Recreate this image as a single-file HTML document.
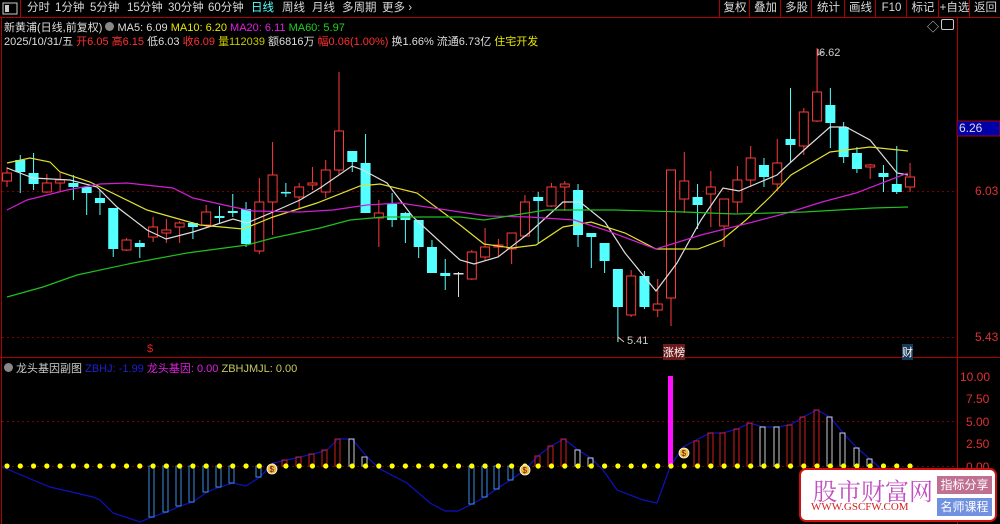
<!DOCTYPE html>
<html><head><meta charset="utf-8"><style>
*{margin:0;padding:0}
body{width:1000px;height:524px;background:#000;overflow:hidden;font-family:"Liberation Sans","Noto Sans CJK SC",sans-serif;position:relative}
.t{position:absolute;white-space:nowrap;font-size:11px}
.m{position:absolute;top:0;height:17px;line-height:17px;font-size:11.5px;color:#d8d8d8;white-space:nowrap}
.b{position:absolute;top:0;height:17px;line-height:17px;font-size:11.5px;color:#d8d8d8;border-left:1px solid #a00;text-align:center}
</style></head><body>
<svg id="s" width="1000" height="524" style="position:absolute;left:0;top:0">
<line x1="0" y1="17.5" x2="1000" y2="17.5" stroke="#b00000"/>
<line x1="1.5" y1="18" x2="1.5" y2="524" stroke="#b00000"/>
<line x1="957.5" y1="18" x2="957.5" y2="524" stroke="#b00000"/>
<line x1="0" y1="357.5" x2="1000" y2="357.5" stroke="#b00000"/>
<line x1="2" y1="191.5" x2="957" y2="191.5" stroke="#700" stroke-dasharray="2,3"/>
<line x1="2" y1="337.5" x2="957" y2="337.5" stroke="#700" stroke-dasharray="2,3"/>
<line x1="2" y1="421.5" x2="957" y2="421.5" stroke="#700" stroke-dasharray="2,3"/>
<line x1="2" y1="466.5" x2="957" y2="466.5" stroke="#700" stroke-dasharray="2,3"/>
<rect x="3" y="3" width="14" height="11" fill="none" stroke="#ccc"/><rect x="5" y="5" width="4" height="7" fill="#ccc"/>
<line x1="20.5" y1="0" x2="20.5" y2="17" stroke="#b00000"/>
<rect x="957" y="121" width="43" height="15" fill="#0000a8" stroke="#b00000"/>
<g id="g"></g>
</svg>
<div class="m" style="left:27px">分时</div><div class="m" style="left:55px">1分钟</div><div class="m" style="left:90px">5分钟</div><div class="m" style="left:127px">15分钟</div><div class="m" style="left:168px">30分钟</div><div class="m" style="left:208px">60分钟</div><div class="m" style="left:251px;color:#54ffff">日线</div><div class="m" style="left:282px">周线</div><div class="m" style="left:312px">月线</div><div class="m" style="left:342px">多周期</div><div class="m" style="left:382px">更多 ›</div>
<div class="b" style="left:719px;width:30px">复权</div><div class="b" style="left:749px;width:31px">叠加</div><div class="b" style="left:780px;width:31px">多股</div><div class="b" style="left:811px;width:33px">统计</div><div class="b" style="left:844px;width:31px">画线</div><div class="b" style="left:875px;width:31px">F10</div><div class="b" style="left:906px;width:32px">标记</div><div class="b" style="left:938px;width:31px">+自选</div><div class="b" style="left:969px;width:31px;border-right:1px solid #a00">返回</div>
<div class="t" style="left:4px;top:19px;font-size:11px;color:#ddd">新黄浦(日线,前复权) <span style="display:inline-block;width:9px;height:9px;border-radius:50%;background:#888"></span> MA5: 6.09 <span style="color:#e8e800">MA10: 6.20</span> <span style="color:#e020e0">MA20: 6.11</span> <span style="color:#20d020">MA60: 5.97</span></div>
<div class="t" style="left:4px;top:33px;font-size:11px;color:#ddd">2025/10/31/五 <span style="color:#ff3030">开6.05 高6.15</span> 低6.03 <span style="color:#ff3030">收6.09</span> <span style="color:#c8c800">量112039</span> 额6816万 <span style="color:#ff3030">幅0.06(1.00%)</span> 换1.66% 流通6.73亿 <span style="color:#e8e800">住宅开发</span></div>
<div class="t" style="left:927px;top:18px;font-size:12px;color:#ccc">◇</div>
<div class="t" style="left:941px;top:19px;width:11px;height:9px;border:1px solid #ccc;border-radius:2px"></div>
<div class="t" style="left:959px;top:121px;font-size:12px;color:#ddd">6.26</div>
<div class="t" style="left:975px;top:184px;font-size:12px;color:#e03030">6.03</div>
<div class="t" style="left:975px;top:330px;font-size:12px;color:#e03030">5.43</div>
<div class="t" style="left:819px;top:47px;font-size:11px;color:#ccc">6.62</div>
<div class="t" style="left:627px;top:335px;font-size:11px;color:#ccc">5.41</div>
<div class="t" style="left:147px;top:343px;font-size:11px;color:#e02020">$</div>
<div class="t" style="left:663px;top:344px;font-size:11px;color:#fff;background:#6a1a1a">涨榜</div>
<div class="t" style="left:902px;top:344px;font-size:11px;color:#fff;background:#1a3a5a">财</div>
<div class="t" style="left:4px;top:360px;font-size:11px;color:#ccc"><span style="display:inline-block;width:9px;height:9px;border-radius:50%;background:#888"></span> 龙头基因副图 <span style="color:#2020d0">ZBHJ: -1.99</span> <span style="color:#e020e0">龙头基因: 0.00</span> <span style="color:#c8c860">ZBHJMJL: 0.00</span></div>
<div class="t" style="left:960px;top:370px;font-size:12px;color:#e03030">10.00</div>
<div class="t" style="left:966px;top:392px;font-size:12px;color:#e03030">7.50</div>
<div class="t" style="left:966px;top:415px;font-size:12px;color:#e03030">5.00</div>
<div class="t" style="left:966px;top:437px;font-size:12px;color:#e03030">2.50</div>
<div class="t" style="left:966px;top:460px;font-size:12px;color:#e03030">0.00</div>
<div style="position:absolute;left:799px;top:468px;width:194px;height:50px;background:#fff;border:2px solid #d01010;border-radius:7px">
<div class="t" style="left:12px;top:2px;font-size:24px;color:#c050c0;font-family:'Noto Serif CJK SC',serif">股市财富网</div>
<div class="t" style="left:10px;top:31px;font-size:11px;color:#d02020;font-family:'Liberation Serif',serif">WWW.GSCFW.COM</div>
<div class="t" style="left:136px;top:6px;width:55px;height:18px;background:#c07090;color:#fff;font-size:12px;text-align:center;line-height:18px">指标分享</div>
<div class="t" style="left:136px;top:28px;width:55px;height:18px;background:#7090e0;color:#fff;font-size:12px;text-align:center;line-height:18px">名师课程</div>
</div>
<script>
var C=[[173,181,167,187,'r'],[160,172,155,193,'c'],[173,184,153,190,'c'],[183,192,174,193,'r'],[180,183,173,192,'r'],[183,187,175,200,'c'],[187,193,187,215,'c'],[198,203,190,215,'c'],[208,249,208,257,'c'],[240,250,238,251,'r'],[243,247,240,258,'c'],[227,237,217,242,'r'],[230,233,219,243,'r'],[223,227,221,243,'r'],[223,227,222,239,'c'],[212,225,205,227,'r'],[216,218,206,223,'c'],[211,213,194,217,'c'],[209,244,202,247,'c'],[202,251,178,254,'r'],[175,202,142,235,'r'],[192,193,183,197,'c'],[187,197,183,208,'r'],[183,185,167,190,'r'],[170,192,160,198,'r'],[131,170,72,175,'r'],[151,162,152,172,'c'],[163,213,134,213,'c'],[213,218,200,247,'r'],[204,220,193,227,'c'],[213,220,212,243,'c'],[220,247,220,258,'c'],[247,273,240,273,'c'],[273,276,259,290,'c'],[273,274,272,297,'w'],[252,279,250,280,'r'],[247,257,228,260,'r'],[245,247,239,257,'r'],[233,249,233,264,'r'],[202,236,195,237,'r'],[197,201,192,243,'c'],[187,206,183,207,'r'],[184,187,181,211,'r'],[190,235,184,247,'c'],[233,237,233,268,'c'],[243,261,243,273,'c'],[269,307,269,342,'c'],[276,315,270,317,'r'],[276,307,271,309,'c'],[304,310,279,317,'r'],[170,298,170,326,'r'],[181,199,152,213,'r'],[197,205,184,229,'c'],[187,194,171,227,'r'],[199,226,199,247,'r'],[180,202,166,213,'r'],[158,180,146,187,'r'],[165,177,158,187,'c'],[163,184,139,191,'r'],[139,145,88,163,'c'],[112,146,108,155,'r'],[92,121,48,122,'r'],[105,123,88,148,'c'],[127,157,122,163,'c'],[153,169,147,173,'c'],[165,167,164,179,'r'],[173,177,165,192,'c'],[184,192,146,194,'c'],[177,187,163,192,'r']];
var h='';function X(i){return 7+13.28*i}
C.forEach(function(c,i){var x=X(i),col=c[4]=='r'?'#ff3a3a':c[4]=='c'?'#54ffff':'#ddd';
h+='<line x1="'+x+'" y1="'+c[2]+'" x2="'+x+'" y2="'+c[3]+'" stroke="'+col+'"/>';
var hh=Math.max(c[1]-c[0],1.5);
if(c[4]=='r')h+='<rect x="'+(x-4.5)+'" y="'+c[0]+'" width="9" height="'+hh+'" fill="#000" stroke="'+col+'"/>';
else h+='<rect x="'+(x-5)+'" y="'+c[0]+'" width="10" height="'+hh+'" fill="'+col+'"/>';});
function P(p,c){h+='<polyline points="'+p+'" fill="none" stroke="'+c+'" stroke-width="1.2"/>'}
P('7,168 33,178 70,180 97,187 117,207 147,230 166,239 193,232 233,219 247,223 273,212 300,200 320,188 352,166 363,170 387,183 413,217 460,260 474,264 498,257 529,233 563,202 580,202 605,222 625,253 656,291 677,263 701,220 723,188 739,191 777,175 804,150 830,127 846,127 870,140 897,173 908,175','#ddd');
P('7,163 30,158 50,162 60,172 90,182 147,210 200,225 243,229 273,217 317,203 360,186 380,184 417,193 460,225 484,244 512,248 536,245 563,227 591,222 625,233 656,249 698,249 722,240 746,220 770,197 791,175 830,152 870,147 908,151','#e0e030');
P('7,210 27,200 67,190 100,184 127,183 173,188 193,198 233,207 253,211 300,212 333,210 367,205 400,203 460,212 488,216 529,217 574,220 605,230 656,249 701,235 753,222 787,213 822,202 856,193 908,173','#d020d0');
P('7,297 43,287 77,275 133,263 187,253 247,245 273,238 320,228 350,220 383,217 460,217 484,220 546,210 615,210 684,212 735,214 804,212 873,208 908,207','#20c020');
h+='<polyline points="818,49 818,55 823,52" fill="none" stroke="#ccc"/><polyline points="618,342 618,337 624,342" fill="none" stroke="#ccc"/>';
P('2,467 33,480 50,487 93,497 100,500 113,513 140,522 152,517 167,512 180,506 193,502 207,492 220,487 233,483 246,486 260,477 273,463 287,460 300,457 313,454 327,450 338,439 352,439 367,457 380,469 407,483 430,503 445,511 458,511 472,504 485,497 498,488 512,479 525,470 538,456 551,446 564,439 578,450 591,458 603,470 617,490 643,500 657,503 670,467 683,447 710,433 723,433 737,429 750,423 763,427 777,427 790,425 803,417 817,410 830,417 843,433 857,448 870,459 880,468 900,480','#1010c0');
var B=[[152,517,'b'],[166,512,'b'],[179,506,'b'],[192,502,'b'],[206,492,'b'],[219,487,'b'],[232,483,'b'],[259,477,'b'],[285,460,'r'],[299,457,'r'],[312,454,'r'],[325,450,'r'],[338,439,'r'],[352,439,'w'],[365,457,'w'],[472,504,'b'],[485,497,'b'],[497,489,'b'],[511,480,'b'],[538,456,'r'],[551,446,'r'],[564,439,'r'],[578,450,'w'],[591,458,'w'],[697,441,'r'],[711,433,'r'],[723,433,'r'],[737,429,'r'],[750,423,'r'],[763,427,'w'],[777,427,'w'],[790,425,'r'],[803,417,'r'],[817,410,'r'],[830,417,'w'],[843,433,'w'],[857,448,'w'],[870,459,'w']];
B.forEach(function(b){var c=b[2]=='b'?'#3a8ee0':b[2]=='r'?'#d02020':'#ccc';var y1=Math.min(466,b[1]),y2=Math.max(466,b[1]);h+='<rect x="'+(b[0]-3)+'" y="'+y1+'" width="5" height="'+(y2-y1)+'" fill="none" stroke="'+c+'"/>';});
h+='<rect x="668" y="376" width="5" height="90" fill="#ff10ff"/>';
for(var i=0;i<69;i++)h+='<circle cx="'+X(i)+'" cy="466" r="2.6" fill="#ffff00"/>';
[[272,469],[525,470],[684,453]].forEach(function(p){h+='<circle cx="'+p[0]+'" cy="'+p[1]+'" r="5" fill="#e8c040" stroke="#fff" stroke-width=".8"/><text x="'+(p[0]-2.5)+'" y="'+(p[1]+3)+'" font-size="8" fill="#700">$</text>';});
document.getElementById('g').innerHTML=h;
</script>
</body></html>
